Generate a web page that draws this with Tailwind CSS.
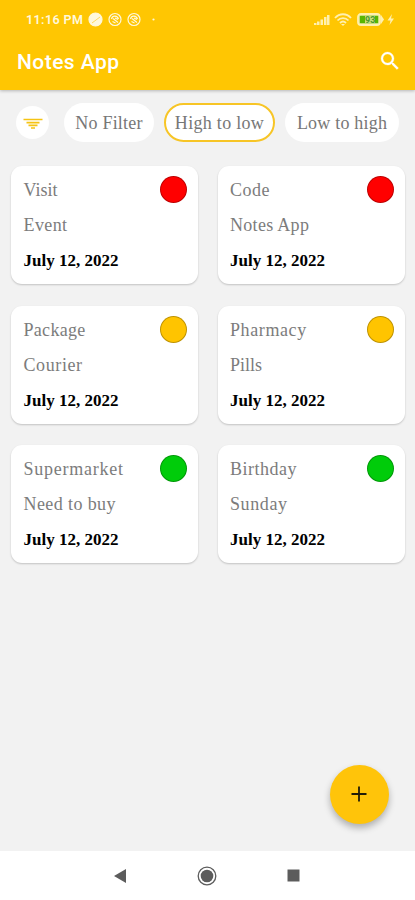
<!DOCTYPE html>
<html lang="en">
<head>
  <meta charset="UTF-8" />
  <meta name="viewport" content="width=device-width, initial-scale=1.0" />
  <title>Notes App</title>
  <script src="https://cdn.jsdelivr.net/npm/@tailwindcss/browser@4"></script>
</head>
<body class="h-[900px] w-[415px] overflow-hidden flex flex-col bg-[#f2f2f2] font-['Liberation_Serif',serif]">

  <!-- Header -->
  <header class="h-[90px] shrink-0 bg-[#ffc602] text-white shadow-[0_1px_3px_rgba(0,0,0,0.25)] font-[Roboto,sans-serif]">
    <div class="h-10 pl-[26px] pr-[20px] flex items-center justify-between">
      <div class="flex items-center text-[#fff8dc]">
        <span class="w-[57px] whitespace-nowrap text-[12.5px] leading-5 font-semibold tracking-[0.4px]">11:16 PM</span>
        <svg class="ml-[5px]" width="68" height="16" viewBox="0 0 68 16" fill="none" stroke="currentColor" stroke-width="1.2">
          <circle cx="7.5" cy="7.5" r="6.5" fill="currentColor" />
          <path d="M4 11l8-6" stroke="#ffd95a" stroke-width="1" />
          <circle cx="27" cy="7.5" r="6" />
          <path d="M23.500 7c1-4 6-3.500 7 0M25 6.500l5 4M24.500 9.500l3 1.500M27 6l3 1.500" />
          <circle cx="46" cy="7.5" r="6" />
          <path d="M42.500 7c1-4 6-3.500 7 0M44 6.500l5 4M43.500 9.500l3 1.500M46 6l3 1.500" />
          <circle cx="65.5" cy="7.5" r="1.1" fill="currentColor" stroke="none" />
        </svg>
      </div>
      <svg width="82" height="16" viewBox="0 0 82 16" fill="#fff0b0">
        <path d="M1 11h2.500v2H1zM4 9.500h2.500v3.500H4zM7.500 7.500H10V13H7.500zM11 5h2.500v8H11zM14 3h2.500v10H14z" />
        <path d="M22 6c4.500-5 11.500-5 16 0M24.500 8.500c3-3.300 8-3.300 11 0M27 11c2-2 4-2 6 0" fill="none" stroke="#fff0b0" stroke-width="1.8" />
        <path d="M28 12h4l-2 2z" />
        <rect x="45" y="2" width="22" height="11" rx="3" fill="#c9df7c" stroke="#fff0b0" stroke-width="1.8" />
        <path d="M68 3l3 4.500-3 4.500z" />
        <path d="M47 4h5v7h-5zM62 4h3v7h-3z" fill="#59b600" />
        <text x="52" y="11" font-size="9" font-weight="700" fill="#4d9a2c">93</text>
        <path d="M79 2l-4.500 6.500h3l-1 4.500 4.500-6.500h-3z" />
      </svg>
    </div>
    <div class="h-[45px] pl-[17px] pr-[13px] flex items-center justify-between">
      <h1 class="text-[21px] leading-6 font-medium tracking-[0.45px] -mt-0.5">Notes App</h1>
      <svg class="-mt-1" width="24" height="24" viewBox="0 0 24 24" fill="currentColor">
        <path d="M15.500 14h-.790l-.280-.270A6.471 6.471 0 0 0 16 9.500 6.500 6.500 0 1 0 9.500 16c1.610 0 3.090-.590 4.230-1.570l.270.280v.790l5 4.990L20.490 19l-4.990-5zm-6 0C7.010 14 5 11.990 5 9.500S7.010 5 9.500 5 14 7.010 14 9.500 11.990 14 9.500 14z" stroke="currentColor" stroke-width=".3" />
      </svg>
    </div>
  </header>

  <!-- Filters -->
  <div class="mt-[13px] h-[39px] shrink-0 pl-4 flex items-center text-[18px] text-[#777] whitespace-nowrap">
    <button class="size-[33px] rounded-full bg-white flex items-center justify-center">
      <svg width="20" height="12" viewBox="0 0 20 12" stroke="#f5c414" stroke-width="1.7">
        <path d="M.500 2.500h19M3.500 5.600h13M5.500 8.400h9M8 11h4" />
      </svg>
    </button>
    <button class="ml-[15px] w-[90px] h-[39px] pt-[2px] rounded-full bg-white tracking-[0.2px]">No Filter</button>
    <button class="ml-[10px] w-[111px] h-[39px] pt-[2px] rounded-full bg-white border-2 border-[#f7c526] tracking-[0.3px]">High to low</button>
    <button class="ml-[10px] w-[114px] h-[39px] pt-[2px] rounded-full bg-white tracking-[0.2px]">Low to high</button>
  </div>

  <!-- Notes -->
  <main id="notes" class="mt-6 grow px-[11px] grid grid-cols-2 content-start gap-x-5 gap-y-[21.5px]"></main>

  <!-- Add note -->
  <button class="absolute left-[330px] top-[765px] size-[59px] rounded-full bg-[#ffc40a] flex items-center justify-center shadow-[0_4px_7px_rgba(0,0,0,0.28)]">
    <svg class="-ml-px -mt-px" width="16" height="16" viewBox="0 0 16 16" stroke="#211c08" stroke-width="1.8">
      <path d="M.500 8h15M8 .500v15" />
    </svg>
  </button>

  <!-- Navigation bar -->
  <nav class="h-[49px] shrink-0 bg-white pl-[113px] pr-[115px] flex items-center justify-between text-[#5c5c5c]">
    <svg width="14" height="16" viewBox="0 0 14 16" fill="currentColor"><path d="M1 8L13 1v14z" /></svg>
    <svg width="20" height="20" viewBox="0 0 20 20" fill="currentColor">
      <circle cx="10" cy="10" r="8.8" fill="none" stroke="currentColor" stroke-width="1.3" />
      <circle cx="10" cy="10" r="6.3" />
    </svg>
    <svg width="13" height="13" viewBox="0 0 13 13" fill="currentColor"><path d="M.500.500h12v12H.500z" /></svg>
  </nav>

  <script>
    // gap is the letter spacing of the title and of the text
    const notes = [
      { title: "Visit", text: "Event", color: "#ff0000", gap: [0, 0.4] },
      { title: "Code", text: "Notes App", color: "#ff0000", gap: [0.5, 0.3] },
      { title: "Package", text: "Courier", color: "#ffc400", gap: [0.3, 0.6] },
      { title: "Pharmacy", text: "Pills", color: "#ffc400", gap: [0.6, 0] },
      { title: "Supermarket", text: "Need to buy", color: "#00cc0a", gap: [0.75, 0.4] },
      { title: "Birthday", text: "Sunday", color: "#00cc0a", gap: [0.5, 0.6] }
    ];

    const notesContainer = document.getElementById("notes");

    notes.forEach(note => {
      const card = document.createElement("article");
      card.className = "h-[118px] w-[187px] rounded-[11px] bg-white pl-[12.5px] pr-[11px] pt-[7px] shadow-[0_1px_2px_rgba(0,0,0,0.2)] text-[18px] leading-[35px] text-[#7c7c7c] flex justify-between";
      card.innerHTML = `
        <div class="whitespace-nowrap">
          <h2 style="letter-spacing:${note.gap[0]}px">${note.title}</h2>
          <p style="letter-spacing:${note.gap[1]}px">${note.text}</p>
          <p class="text-[17px] font-bold text-black">July 12, 2022</p>
        </div>
        <span class="mt-[3px] size-[27px] rounded-full border border-black/25" style="background-color:${note.color}"></span>`;
      notesContainer.appendChild(card);
    });
  </script>
</body>
</html>
